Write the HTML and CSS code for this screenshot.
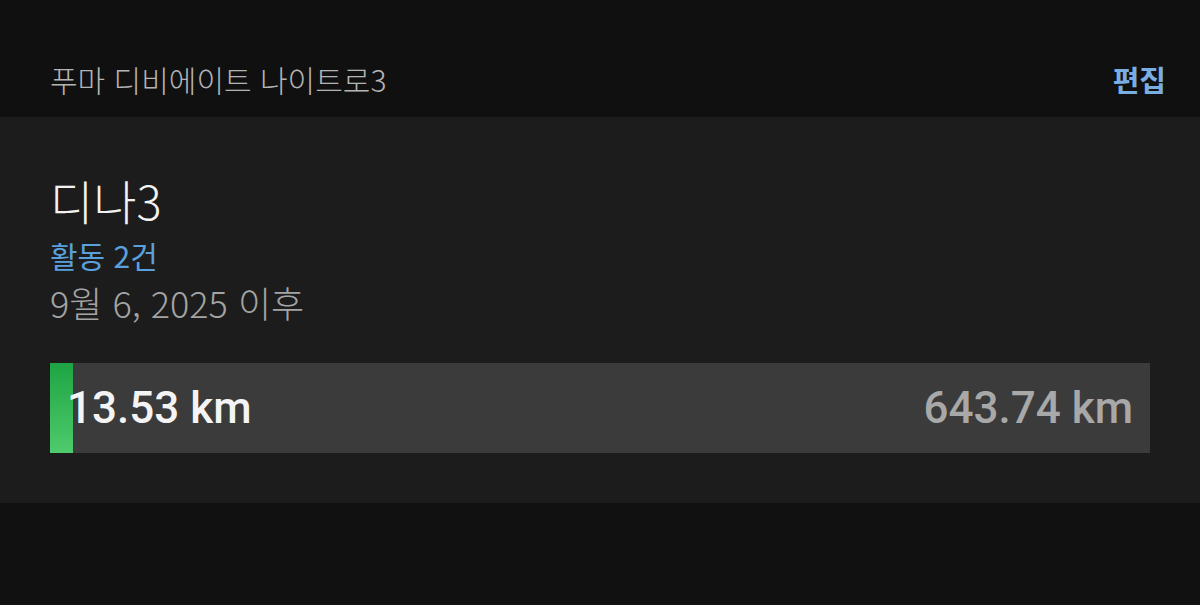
FILE: index.html
```html
<!DOCTYPE html>
<html lang="ko">
<head>
<meta charset="utf-8">
<link rel="stylesheet" href="styles.css">
</head>
<body>
  <header class="header">
    <span class="shoe-name">푸마 디비에이트 나이트로3</span>
    <span class="edit">편집</span>
  </header>
  <section class="card">
    <h1 class="title">디나3</h1>
    <div class="activities">활동 2건</div>
    <div class="since">9월 6, 2025 이후</div>
    <div class="bar">
      <div class="fill" style="width: 23px"></div>
      <span class="current">13.53 km</span>
      <span class="goal">643.74 km</span>
    </div>
  </section>
</body>
</html>
```
FILE: styles.css
```css
html, body {
  margin: 0;
  padding: 0;
  background: #111111;
  font-family: Roboto, "Noto Sans CJK KR", sans-serif;
  width: 1200px;
  height: 605px;
  overflow: hidden;
}
.header {
  height: 117px;
  box-sizing: border-box;
  display: flex;
  align-items: center;
  justify-content: space-between;
  padding: 40px 34px 0 50px;
  background: #101010;
}
.shoe-name {
  font-family: "Noto Sans CJK KR", sans-serif;
  font-weight: 300;
  font-size: 30px;
  color: #b4b4b4;
}
.edit {
  font-family: "Noto Sans CJK KR", sans-serif;
  font-size: 29px;
  font-weight: 700;
  color: #7aaee3;
}
.card {
  background: #1c1c1c;
  padding: 56px 50px 50px;
  height: 386px;
  box-sizing: border-box;
  display: flex;
  flex-direction: column;
}
.title {
  margin: 0;
  font-family: "Noto Sans CJK KR", sans-serif;
  font-weight: 300;
  font-size: 47px;
  line-height: 54px;
  color: #f2f2f2;
}
.activities {
  font-family: "Noto Sans CJK KR", sans-serif;
  font-size: 30px;
  line-height: 44px;
  color: #5aa0dc;
  margin-top: 6px;
}
.since {
  font-family: "Noto Sans CJK KR", sans-serif;
  font-weight: 300;
  font-size: 36px;
  line-height: 48px;
  color: #a4a4a4;
  margin-top: 1px;
}
.bar {
  margin-top: auto;
  position: relative;
  height: 90px;
  background: #3b3b3b;
  display: flex;
  align-items: center;
  justify-content: space-between;
  padding: 0 17px 0 17px;
}
.fill {
  position: absolute;
  left: 0;
  top: 0;
  bottom: 0;
  background: linear-gradient(180deg, #1ea444 0%, #4fcb6c 100%);
}
.current, .goal {
  position: relative;
  font-family: Roboto, sans-serif;
  font-weight: 500;
  font-size: 44px;
}
.current { color: #f4f4f4; }
.goal { color: #a8a8a8; }
```
